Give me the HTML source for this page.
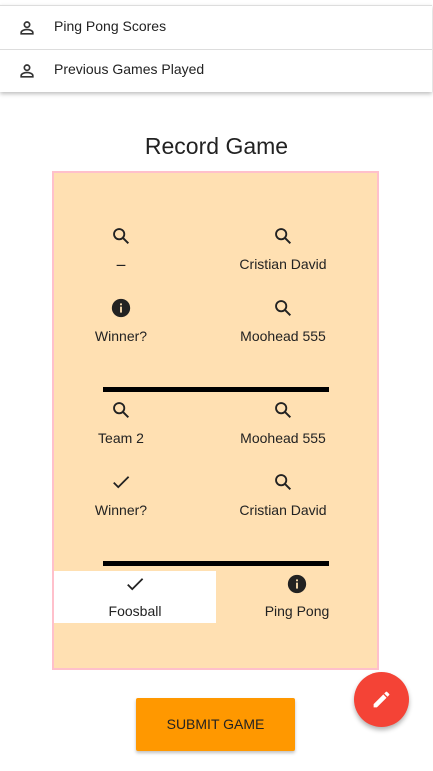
<!DOCTYPE html>
<html><head><style>
body{margin:0;width:433px;height:771px;background:#fff;font-family:"Comic Sans MS","Liberation Sans",sans-serif;color:#222;position:relative;overflow:hidden}
.a{position:absolute}
.menu{left:0;top:5px;width:432px;height:86px;border-top:1px solid #ddd;box-shadow:0 2px 4px rgba(0,0,0,.25);background:#fff}
.row{position:absolute;left:0;width:432px;height:43px;font-size:14px}
.row span{position:absolute;left:54px;top:12px}
.row svg{position:absolute;left:17px;top:12px}
.box{left:52px;top:171px;width:323px;height:495px;background:#ffe0b2;border:2px solid #ffc0cb}
.c{position:absolute;width:162px;text-align:center;font-size:14px}
.ic{position:absolute;width:162px;text-align:center}
.p{margin-left:-14px}
.line{position:absolute;left:49px;width:226px;height:5px;background:#000}
</style></head><body>
<svg width="0" height="0" style="position:absolute"><defs>
<symbol id="s" viewBox="0 0 24 24"><circle cx="10" cy="10" r="5.6" fill="none" stroke="#222" stroke-width="2"/><path d="M14 14l6 6" stroke="#222" stroke-width="2.2"/></symbol>
<symbol id="u" viewBox="0 0 24 24"><circle cx="12" cy="8" r="3.2" fill="none" stroke="#333" stroke-width="2"/><path d="M5 19v-1.5c0-2.5 4.5-3.7 7-3.7s7 1.2 7 3.7V19z" fill="none" stroke="#333" stroke-width="2"/></symbol>
<symbol id="i" viewBox="0 0 24 24"><circle cx="12" cy="12" r="10" fill="#222"/><rect x="11" y="10.5" width="2" height="6.5" fill="#ffe0b2"/><rect x="11" y="7" width="2" height="2" fill="#ffe0b2"/></symbol>
<symbol id="k" viewBox="0 0 24 24"><path d="M9 16.2L4.8 12l-1.4 1.4L9 19 21 7l-1.4-1.4z" fill="#222"/></symbol>
</defs></svg>
<div class="a menu">
 <div class="row" style="top:0;border-bottom:1px solid #ddd"><svg width="20" height="20"><use href="#u"/></svg><span>Ping Pong Scores</span></div>
 <div class="row" style="top:43px"><svg width="20" height="20"><use href="#u"/></svg><span>Previous Games Played</span></div>
</div>
<div class="a" style="left:0;width:433px;top:133px;text-align:center;font-size:23px">Record Game</div>
<div class="a box">
 <div class="ic p" style="left:0;top:52px"><svg width="22" height="22"><use href="#s"/></svg></div>
 <div class="c p" style="left:0;top:82px;font-size:12px">&#9866;</div>
 <div class="ic p" style="left:162px;top:52px"><svg width="22" height="22"><use href="#s"/></svg></div>
 <div class="c p" style="left:162px;top:83px">Cristian David</div>
 <div class="ic p" style="left:0;top:124px"><svg width="22" height="22"><use href="#i"/></svg></div>
 <div class="c p" style="left:0;top:155px">Winner?</div>
 <div class="ic p" style="left:162px;top:124px"><svg width="22" height="22"><use href="#s"/></svg></div>
 <div class="c p" style="left:162px;top:155px">Moohead 555</div>
 <div class="line" style="top:214px"></div>
 <div class="ic p" style="left:0;top:226px"><svg width="22" height="22"><use href="#s"/></svg></div>
 <div class="c p" style="left:0;top:257px">Team 2</div>
 <div class="ic p" style="left:162px;top:226px"><svg width="22" height="22"><use href="#s"/></svg></div>
 <div class="c p" style="left:162px;top:257px">Moohead 555</div>
 <div class="ic p" style="left:0;top:298px"><svg width="22" height="22"><use href="#k"/></svg></div>
 <div class="c p" style="left:0;top:329px">Winner?</div>
 <div class="ic p" style="left:162px;top:298px"><svg width="22" height="22"><use href="#s"/></svg></div>
 <div class="c p" style="left:162px;top:329px">Cristian David</div>
 <div class="line" style="top:388px"></div>
 <div class="a" style="left:0;top:398px;width:162px;height:52px;background:#fff"></div>
 <div class="ic" style="left:0;top:400px"><svg width="22" height="22"><use href="#k"/></svg></div>
 <div class="c" style="left:0;top:430px">Foosball</div>
 <div class="ic" style="left:162px;top:400px"><svg width="22" height="22"><use href="#i"/></svg></div>
 <div class="c" style="left:162px;top:430px">Ping Pong</div>
</div>
<div class="a" style="left:136px;top:698px;width:159px;height:53px;background:#ff9800;border-radius:2px;box-shadow:0 2px 3px rgba(0,0,0,.25);text-align:center;line-height:53px;font-size:14px;color:#222">SUBMIT GAME</div>
<div class="a" style="left:354px;top:672px;width:55px;height:55px;border-radius:50%;background:#f44336;box-shadow:0 3px 5px rgba(0,0,0,.3)"><svg style="position:absolute;left:17px;top:17px" width="21" height="21" viewBox="0 0 24 24"><path d="M3 17.25V21h3.75L17.8 9.94l-3.75-3.75L3 17.25zM20.7 7.04a1 1 0 0 0 0-1.41l-2.34-2.34a1 1 0 0 0-1.41 0l-1.83 1.83 3.75 3.75 1.83-1.83z" fill="#fff"/></svg></div>
</body></html>
